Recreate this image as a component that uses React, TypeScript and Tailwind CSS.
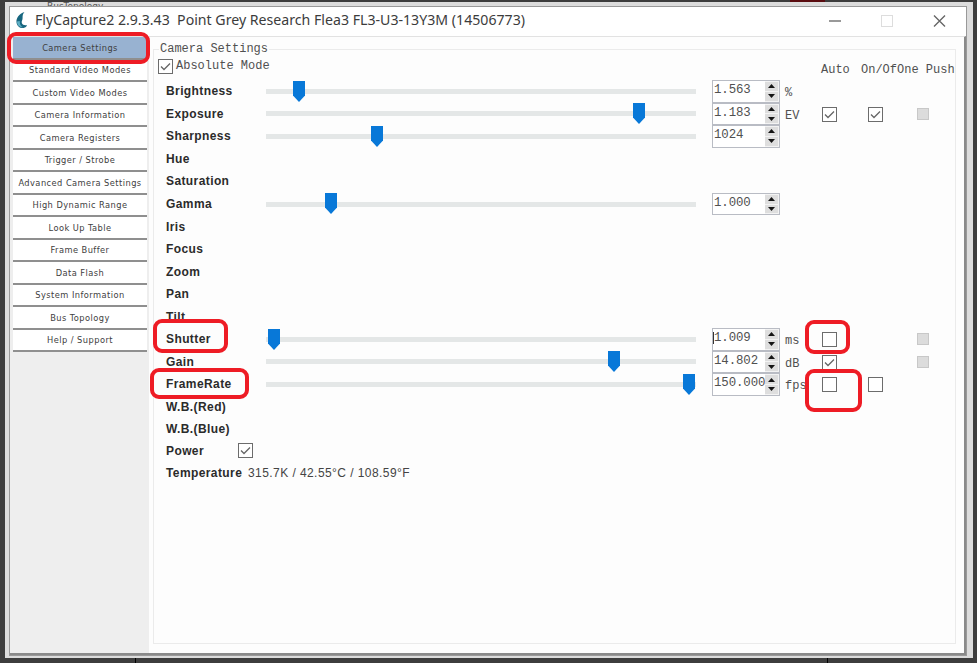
import React from "react";

const mono = "font-['Liberation_Mono',monospace] whitespace-pre text-[12px] leading-none text-[#505050]";

type Row = {
  name: string;
  pos?: number;
  value?: string;
  unit?: string;
  auto?: boolean;
  onOff?: boolean;
  push?: boolean;
  caret?: boolean;
};

const rows: Row[] = [
  { name: "Brightness", pos: 33, value: "1.563", unit: "%" },
  { name: "Exposure", pos: 373, value: "1.183", unit: "EV", auto: true, onOff: true, push: true },
  { name: "Sharpness", pos: 111, value: "1024" },
  { name: "Hue" },
  { name: "Saturation" },
  { name: "Gamma", pos: 65, value: "1.000" },
  { name: "Iris" },
  { name: "Focus" },
  { name: "Zoom" },
  { name: "Pan" },
  { name: "Tilt" },
  { name: "Shutter", pos: 7.5, value: "1.009", unit: "ms", auto: false, push: true, caret: true },
  { name: "Gain", pos: 348, value: "14.802", unit: "dB", auto: true, push: true },
  { name: "FrameRate", pos: 423, value: "150.000", unit: "fps", auto: false, onOff: false },
  { name: "W.B.(Red)" },
  { name: "W.B.(Blue)" },
];

const menu = [
  "Camera Settings",
  "Standard Video Modes",
  "Custom Video Modes",
  "Camera Information",
  "Camera Registers",
  "Trigger / Strobe",
  "Advanced Camera Settings",
  "High Dynamic Range",
  "Look Up Table",
  "Frame Buffer",
  "Data Flash",
  "System Information",
  "Bus Topology",
  "Help / Support",
];

function Check({ on }: { on: boolean }) {
  return (
    <span className="flex h-[15px] w-[15px] shrink-0 items-center justify-center border border-[#6c6c6c] bg-white">
      {on && (
        <svg width="13" height="13" viewBox="0 0 13 13" fill="none" stroke="#666" strokeWidth="1.3">
          <path d="M2 6.5 5 9.5 11 3.5" />
        </svg>
      )}
    </span>
  );
}

function Slider({ pos }: { pos: number }) {
  return (
    <div className="relative flex h-full w-[430px] items-center">
      <div className="h-[5px] w-full bg-[#e4e7e7]" />
      <svg className="absolute top-[0.5px]" style={{ left: pos - 6 }} width="12" height="21" viewBox="0 0 12 21">
        <path d="M0 0H12V14.5L6 21 0 14.5Z" fill="#0878d8" />
      </svg>
    </div>
  );
}

function Spin({ value, caret }: { value: string; caret?: boolean }) {
  return (
    <div className="flex h-full w-[68px] border border-[#b9bcc4] bg-white">
      <span className="flex w-[52px] shrink-0 items-start pt-[3px]">
        <span className={`h-[12px] w-px shrink-0 ${caret ? "bg-[#333]" : ""}`} />
        <span className="font-['Liberation_Mono',monospace] text-[12.4px] leading-none tracking-[-0.1px] whitespace-pre text-[#505050]">
          {value}
        </span>
      </span>
      <span className="flex flex-1 flex-col gap-px bg-[#f3f3f3] py-px pr-px">
        {["M0 4 3.5 0 7 4Z", "M0 0H7L3.5 4Z"].map((d) => (
          <span key={d} className="flex flex-1 items-center justify-center bg-[#dedede]">
            <svg width="7" height="4" viewBox="0 0 7 4">
              <path d={d} fill="#151515" />
            </svg>
          </span>
        ))}
      </span>
    </div>
  );
}

const label = "font-['Liberation_Sans',Arial,sans-serif] text-[12px] leading-none font-bold tracking-[0.4px] text-[#2b2b2b] whitespace-nowrap";

function SettingRow({ r }: { r: Row }) {
  return (
    <div className="grid h-[22.55px] grid-cols-[100px_446px_73px_37px_46px_49px_20px] items-center">
      <span className={label}>{r.name}</span>
      <div className="h-full">{r.pos !== undefined && <Slider pos={r.pos} />}</div>
      <div className="h-full">{r.value && <Spin value={r.value} caret={r.caret} />}</div>
      <span className={`${mono} pt-1`}>{r.unit}</span>
      <div className="pt-px">{r.auto !== undefined && <Check on={r.auto} />}</div>
      <div className="pt-px">{r.onOff !== undefined && <Check on={r.onOff} />}</div>
      <div>{r.push && <span className="block h-3 w-3 border border-[#c8c8c8] bg-[#dcdcdc]" />}</div>
    </div>
  );
}

function TitleBar() {
  return (
    <header className="flex h-[29px] shrink-0 items-center bg-white pb-[2px] pl-[6px]">
      <svg width="12" height="17" viewBox="0 0 12 17">
        <path d="M8.500 0C3 2 0 6 .5 10.500 1 14 4 16.500 7.500 16 9.500 15.700 10.800 14.500 11 13 9 13.600 6.500 13 5.800 11 5.300 9 6.800 8 6.600 5.500 6.500 3.500 7 1.500 8.500 0Z" fill="#17667f" />
        <path d="M1 9.500C1 13 3.500 15.500 7 15.300 4.500 14 3.500 12 3.800 9Z" fill="#5fb0c6" />
      </svg>
      <h1 className="ml-[7px] flex-1 font-['Noto_Sans',sans-serif] text-[14.15px] leading-none whitespace-pre text-[#3c3c3c]">
        FlyCapture2 2.9.3.43{"  "}Point Grey Research Flea3 FL3-U3-13Y3M (14506773)
      </h1>
      <div className="flex items-center gap-[40px] pr-[20px]">
        <svg width="12" height="14" viewBox="0 0 12 14"><path d="M0 7H12" stroke="#777" strokeWidth="1.5" /></svg>
        <svg width="12" height="14" viewBox="0 0 12 14"><rect x=".5" y="1.500" width="11" height="11" fill="none" stroke="#ddd" /></svg>
        <svg width="13" height="14" viewBox="0 0 13 14"><path d="M1 1.500 12 12.500M12 1.500 1 12.500" stroke="#666" strokeWidth="1.4" /></svg>
      </div>
    </header>
  );
}

const red = "absolute border-[4px] border-[#ee1c25] rounded-[9px]";

export default function App() {
  return (
    <div className="relative flex h-[663px] w-[977px] flex-col overflow-hidden bg-[#3d3d3d] pt-[2px] pr-1 pb-[5px] pl-[5px]">
      <div className="flex min-h-0 flex-1 flex-col bg-[#dcdcdc] pr-[6px] pb-[2px] pl-[4px]">
        <div className="flex h-[4px] shrink-0 items-start overflow-hidden pl-[38px] font-['DejaVu_Sans',sans-serif] text-[9px] leading-[9px] text-[#555]">
          <span>BusTopology</span>
        </div>
        <div className="flex min-h-0 flex-1 flex-col border border-[#999] bg-[#fdfdfd]">
          <TitleBar />
          <div className="flex min-h-0 flex-1 border-t border-r-2 border-b-2 border-t-[#e2e2e2] border-r-[#8a8a8a] border-b-[#8a8a8a]">
            <nav className="w-[139px] shrink-0 bg-[#eeeeee] pr-[2px] pl-[3px]">
              {menu.map((m, i) => (
                <div
                  key={m}
                  className={`flex h-[22.5px] items-center justify-center border-b-2 border-[#8f8f8f] font-['DejaVu_Sans_Condensed','DejaVu_Sans',sans-serif] text-[9.2px] leading-none tracking-[0.45px] whitespace-nowrap text-[#404040] ${i === 0 ? "bg-[#98b2d1]" : "bg-white"}`}
                >
                  {m}
                </div>
              ))}
            </nav>
            <main className="flex min-w-0 flex-1 flex-col pt-[12px] pr-[8px] pb-[9px] pl-[4px]">
              <section className="flex min-h-0 flex-1 flex-col border border-[#ebebeb]">
                <h2 className={`${mono} -mt-[7px] ml-[5px] self-start bg-[#fdfdfd] px-px`}>Camera Settings</h2>
                <div className="mt-[4px] flex h-[21px] items-start pl-[4px]">
                  <Check on />
                  <span className={`${mono} ml-[3px] w-[645px] pt-[1px]`}>Absolute Mode</span>
                  <span className={`${mono} w-[40px] pt-[5px]`}>Auto</span>
                  <span className={`${mono} w-[36px] pt-[5px]`}>On/Of</span>
                  <span className={`${mono} pt-[5px]`}>One Push</span>
                </div>
                <div className="pl-[12px]">
                  {rows.map((r) => (
                    <SettingRow key={r.name} r={r} />
                  ))}
                  <div className="flex h-[20px] items-center">
                    <span className={`${label} w-[72px]`}>Power</span>
                    <Check on />
                  </div>
                  <div className="flex h-[24px] items-center">
                    <span className={`${label} w-[82px]`}>Temperature</span>
                    <span className="font-['Liberation_Sans',Arial,sans-serif] text-[12px] leading-none tracking-[0.43px] whitespace-nowrap text-[#444]">
                      315.7K / 42.55°C / 108.59°F
                    </span>
                  </div>
                </div>
              </section>
            </main>
          </div>
        </div>
      </div>
      <div className="absolute top-0 left-[790px] h-[2px] w-[35px] bg-[#5a0c10]" />
      <div className="absolute top-[658px] left-[135px] h-[5px] w-px bg-black" />
      <div className="absolute top-[658px] left-[827px] h-[5px] w-px bg-black" />
      <div className={`${red} top-[32px] left-[7px] h-[32px] w-[143px]`} />
      <div className={`${red} top-[319px] left-[153px] h-[34px] w-[75px]`} />
      <div className={`${red} top-[368px] left-[150px] h-[31px] w-[99px]`} />
      <div className={`${red} top-[320px] left-[805px] h-[34px] w-[45px]`} />
      <div className={`${red} top-[369px] left-[805px] h-[43px] w-[57px]`} />
    </div>
  );
}
